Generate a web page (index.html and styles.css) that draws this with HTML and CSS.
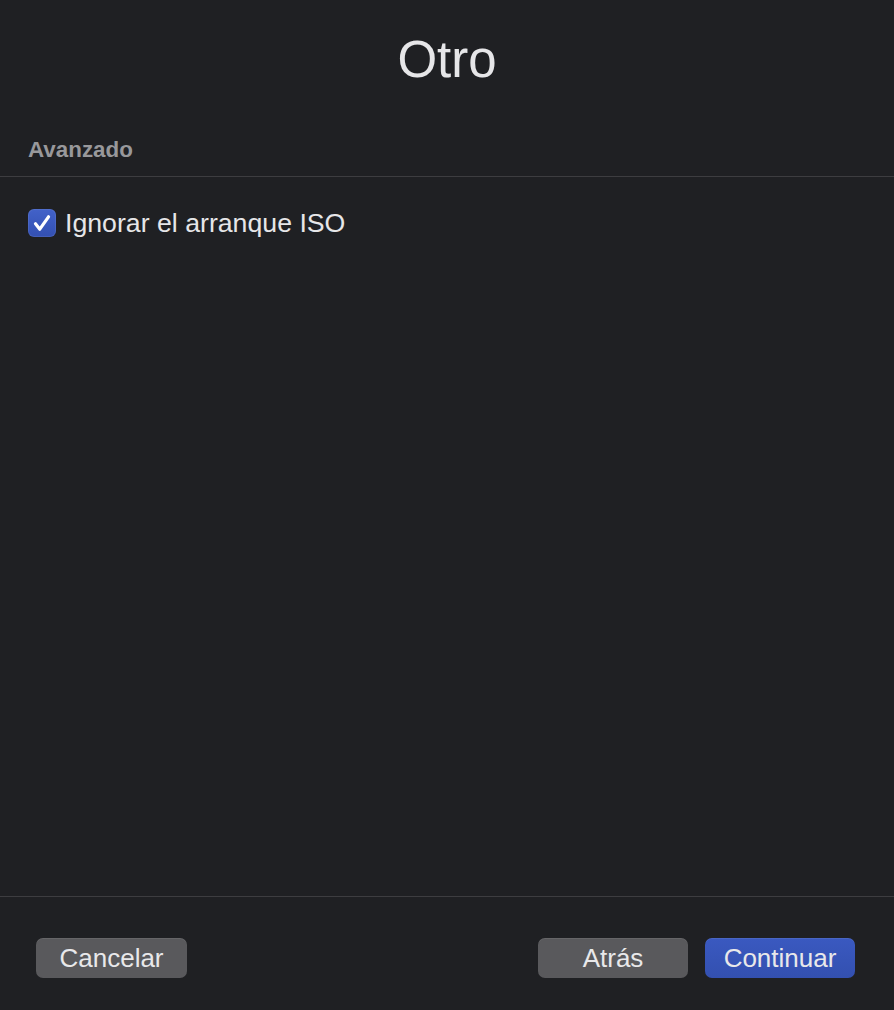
FILE: index.html
```html
<!DOCTYPE html>
<html lang="es">
<head>
<meta charset="utf-8">
<title>Otro</title>
<link rel="stylesheet" href="styles.css">
</head>
<body>
<div class="window">
  <header class="header">
    <h1 class="title">Otro</h1>
    <div class="section-label">Avanzado</div>
  </header>
  <main class="content">
    <label class="check-row">
      <span class="checkbox">
        <svg viewBox="0 0 28 28" width="28" height="28" aria-hidden="true">
          <path d="M7.5 14.8 L11.8 20.2 L20.5 7.8" fill="none" stroke="#ffffff" stroke-width="3.2" stroke-linecap="round" stroke-linejoin="round"/>
        </svg>
      </span>
      <span class="check-text">Ignorar el arranque ISO</span>
    </label>
  </main>
  <footer class="footer">
    <button class="btn btn-wide">Cancelar</button>
    <div class="footer-right">
      <button class="btn">Atrás</button>
      <button class="btn btn-primary">Continuar</button>
    </div>
  </footer>
</div>
</body>
</html>
```
FILE: styles.css
```css
html, body {
  margin: 0;
  padding: 0;
  background: #1f2023;
}
body {
  font-family: "Liberation Sans", Arial, sans-serif;
  color: #e4e4e6;
}
.window {
  width: 894px;
  height: 1010px;
  display: flex;
  flex-direction: column;
  background: #1f2023;
  box-sizing: border-box;
}
.header {
  padding-top: 34px;
  border-bottom: 1px solid #3d3d40;
  padding-bottom: 15px;
}
.title {
  margin: 0;
  font-size: 51px;
  line-height: 51px;
  font-weight: 400;
  text-align: center;
  color: #e6e6e8;
}
.section-label {
  margin-top: 54px;
  padding-left: 28px;
  font-size: 22.4px;
  line-height: 22px;
  font-weight: 700;
  color: #98989b;
}
.content {
  flex: 1;
  padding: 32px 28px 0;
  border-bottom: 1px solid #3d3d40;
}
.check-row {
  display: flex;
  align-items: flex-start;
  gap: 9px;
}
.checkbox {
  width: 28px;
  height: 28px;
  border-radius: 6px;
  background: linear-gradient(#4262c9, #3350b2);
  box-shadow: inset 0 0 0 1px rgba(255,255,255,0.08);
  display: flex;
  flex-shrink: 0;
}
.check-text {
  font-size: 26.7px;
  line-height: 28px;
  color: #e6e6e8;
}
.footer {
  height: 113px;
  box-sizing: border-box;
  padding: 41px 39px 0 36px;
  display: flex;
  justify-content: space-between;
  align-items: flex-start;
}
.footer-right {
  display: flex;
  gap: 17px;
}
.btn {
  width: 150px;
  height: 40px;
  border: none;
  border-radius: 7px;
  background: #59595c;
  color: #e8e8ea;
  font-family: "Liberation Sans", Arial, sans-serif;
  font-size: 26px;
  line-height: 40px;
  padding: 0;
  box-shadow: inset 0 1px 0 rgba(255,255,255,0.08);
}
.btn-wide {
  width: 151px;
}
.btn-primary {
  background: linear-gradient(#3a59c0, #3350b0);
}
```
